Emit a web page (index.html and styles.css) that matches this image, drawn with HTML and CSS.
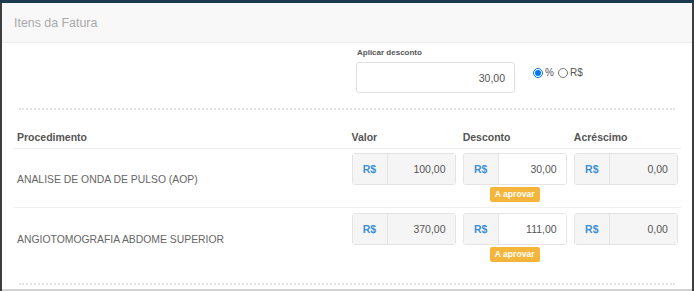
FILE: index.html
```html
<!DOCTYPE html>
<html lang="pt-BR">
<head>
<meta charset="UTF-8">
<title>Itens da Fatura</title>
<link rel="stylesheet" href="styles.css">
</head>
<body>
    <div class="modal">
        <div class="modal-header">Itens da Fatura</div>
        <div class="modal-body">
            <div class="discount-row">
                <div class="discount-field">
                    <label class="discount-label">Aplicar desconto</label>
                    <input type="text" class="discount-input" value="30,00">
                </div>
                <div class="discount-type">
                    <input type="radio" name="tipo" class="radio" checked><span>%</span>
                    <input type="radio" name="tipo" class="radio"><span>R$</span>
                </div>
            </div>
            <div class="dotted"></div>
            <table class="items">
                <colgroup>
                    <col class="col-name">
                    <col class="col-money">
                    <col class="col-money">
                    <col class="col-money">
                </colgroup>
                <thead>
                    <tr>
                        <th>Procedimento</th>
                        <th>Valor</th>
                        <th>Desconto</th>
                        <th>Acréscimo</th>
                    </tr>
                </thead>
                <tbody>
                    <tr>
                        <td class="name">ANALISE DE ONDA DE PULSO (AOP)</td>
                        <td><div class="input-group"><span class="addon">R$</span><input class="money" disabled value="100,00"></div></td>
                        <td>
                            <div class="input-group"><span class="addon">R$</span><input class="money editable" value="30,00"></div>
                            <div class="badge-wrap"><span class="badge">A aprovar</span></div>
                        </td>
                        <td><div class="input-group"><span class="addon">R$</span><input class="money" disabled value="0,00"></div></td>
                    </tr>
                    <tr>
                        <td class="name">ANGIOTOMOGRAFIA ABDOME SUPERIOR</td>
                        <td><div class="input-group"><span class="addon">R$</span><input class="money" disabled value="370,00"></div></td>
                        <td>
                            <div class="input-group"><span class="addon">R$</span><input class="money editable" value="111,00"></div>
                            <div class="badge-wrap"><span class="badge">A aprovar</span></div>
                        </td>
                        <td><div class="input-group"><span class="addon">R$</span><input class="money" disabled value="0,00"></div></td>
                    </tr>
                </tbody>
            </table>
            <div class="dotted bottom"></div>
        </div>
    </div>
</body>
</html>
```

FILE: styles.css
```css
body {
    margin: 0;
    height: 291px;
    overflow: hidden;
    background: linear-gradient(#1e3a4f 3px, #3e3e3e 3px);
    font-family: "Liberation Sans", Arial, sans-serif;
}
.modal {
    margin: 3px 2px 0 2px;
    height: 286px;
    background-color: #fff;
    border-bottom: 2px solid #d2d2d2;
    overflow: hidden;
}
.modal-header {
    height: 39px;
    line-height: 40px;
    padding-left: 12px;
    background-color: #f8f8f8;
    border-bottom: 1px solid #ececec;
    color: #a9a9a9;
    font-size: 12.4px;
}
.modal-body {
    padding: 0 11px;
}
.discount-row {
    display: flex;
    align-items: flex-start;
    padding-left: 343px;
    padding-top: 4px;
}
.discount-field {
    display: flex;
    flex-direction: column;
}
.discount-label {
    font-size: 8px;
    font-weight: bold;
    color: #555;
    margin: 1px 0 5px 1px;
}
.discount-input {
    box-sizing: border-box;
    width: 159px;
    height: 31px;
    border: 1px solid #e0e0e0;
    border-radius: 3px;
    text-align: right;
    padding: 0 9px;
    font-family: "Liberation Sans", Arial, sans-serif;
    font-size: 10.5px;
    color: #555;
    outline: none;
}
.discount-type {
    display: flex;
    align-items: center;
    margin: 20px 0 0 17px;
    font-size: 10px;
    color: #555;
}
.radio {
    width: 10px;
    height: 10px;
    margin: 0 2px 0 1px;
}
.discount-type span {
    margin-right: 3px;
}
.dotted {
    margin: 15px 6px 0 6px;
    border-top: 2px dotted #e3e3e3;
}
.dotted.bottom {
    margin-top: 16px;
}
.items {
    width: 668px;
    table-layout: fixed;
    border-collapse: collapse;
    margin-top: 15px;
}
.col-name {
    width: 334px;
}
.col-money {
    width: 111px;
}
.items th {
    text-align: left;
    font-size: 10.5px;
    font-weight: bold;
    color: #555;
    padding: 6px 4px 5px 4px;
    border-bottom: 1px solid #eeeeee;
}
.items td {
    padding: 4px 4px 5px 4px;
    vertical-align: top;
    border-bottom: 1px solid #f0f0f0;
}
.items tbody tr + tr td {
    padding-top: 5px;
}
.items tbody tr:last-child td {
    border-bottom: none;
}
.items td.name {
    vertical-align: middle;
    font-size: 10.4px;
    color: #666;
    padding-top: 8px;
}
.input-group {
    display: flex;
    width: 104px;
    height: 32px;
    box-sizing: border-box;
    border: 1px solid #e4e4e4;
    border-radius: 3px;
    overflow: hidden;
}
.addon {
    width: 34px;
    flex-shrink: 0;
    display: flex;
    align-items: center;
    justify-content: center;
    background-color: #f5f5f5;
    border-right: 1px solid #e4e4e4;
    color: #3b8fd8;
    font-weight: bold;
    font-size: 10.5px;
}
.money {
    flex: 1;
    min-width: 0;
    border: none;
    background-color: #f5f5f5;
    text-align: right;
    padding: 0 9px 0 0;
    font-family: "Liberation Sans", Arial, sans-serif;
    font-size: 10.5px;
    color: #555;
    outline: none;
}
.money.editable {
    background-color: #fff;
}
.badge-wrap {
    width: 104px;
    display: flex;
    justify-content: center;
    margin-top: 2px;
}
.badge {
    display: block;
    background-color: #f5b53a;
    color: #fff;
    font-weight: bold;
    font-size: 8.6px;
    line-height: 15px;
    padding: 0 5px;
    border-radius: 2px;
}
```
